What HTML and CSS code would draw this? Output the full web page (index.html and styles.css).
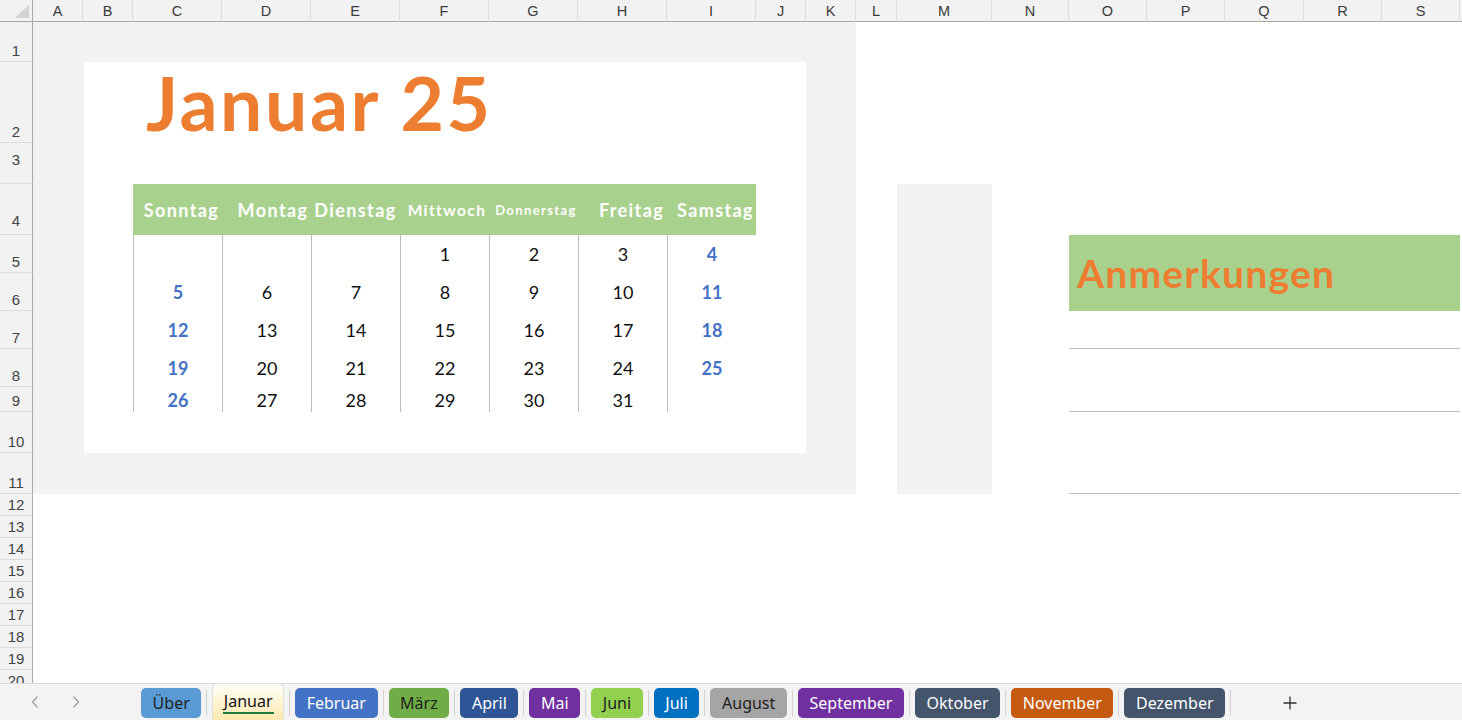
FILE: index.html
```html
<!DOCTYPE html>
<html lang="de">
<head>
<meta charset="utf-8">
<title>Januar 25</title>
<link rel="stylesheet" href="styles.css">
</head>
<body>
<div class="app">
  <div class="sheet">
    <div class="corner"><span class="tri"></span></div>
    <div class="colhead">A</div>
    <div class="colhead">B</div>
    <div class="colhead">C</div>
    <div class="colhead">D</div>
    <div class="colhead">E</div>
    <div class="colhead">F</div>
    <div class="colhead">G</div>
    <div class="colhead">H</div>
    <div class="colhead">I</div>
    <div class="colhead">J</div>
    <div class="colhead">K</div>
    <div class="colhead">L</div>
    <div class="colhead">M</div>
    <div class="colhead">N</div>
    <div class="colhead">O</div>
    <div class="colhead">P</div>
    <div class="colhead">Q</div>
    <div class="colhead">R</div>
    <div class="colhead">S</div>
    <div class="colhead filler"></div>

    <div class="rowhead">1</div>
    <div class="rowhead">2</div>
    <div class="rowhead top">3</div>
    <div class="rowhead low">4</div>
    <div class="rowhead">5</div>
    <div class="rowhead">6</div>
    <div class="rowhead">7</div>
    <div class="rowhead">8</div>
    <div class="rowhead">9</div>
    <div class="rowhead">10</div>
    <div class="rowhead">11</div>
    <div class="rowhead">12</div>
    <div class="rowhead">13</div>
    <div class="rowhead">14</div>
    <div class="rowhead">15</div>
    <div class="rowhead">16</div>
    <div class="rowhead">17</div>
    <div class="rowhead">18</div>
    <div class="rowhead">19</div>
    <div class="rowhead">20</div>

    <div class="panel"></div>
    <div class="card"></div>
    <div class="title">Januar 25</div>

    <div class="calendar">
      <div class="dayname s1">Sonntag</div>
      <div class="dayname s2">Montag</div>
      <div class="dayname">Dienstag</div>
      <div class="dayname md s3">Mittwoch</div>
      <div class="dayname sm s3">Donnerstag</div>
      <div class="dayname s4">Freitag</div>
      <div class="dayname s1">Samstag</div>

      <div class="day"></div>
      <div class="day"></div>
      <div class="day"></div>
      <div class="day">1</div>
      <div class="day">2</div>
      <div class="day">3</div>
      <div class="day we">4</div>

      <div class="day we">5</div>
      <div class="day">6</div>
      <div class="day">7</div>
      <div class="day">8</div>
      <div class="day">9</div>
      <div class="day">10</div>
      <div class="day we">11</div>

      <div class="day we">12</div>
      <div class="day">13</div>
      <div class="day">14</div>
      <div class="day">15</div>
      <div class="day">16</div>
      <div class="day">17</div>
      <div class="day we">18</div>

      <div class="day we">19</div>
      <div class="day">20</div>
      <div class="day">21</div>
      <div class="day">22</div>
      <div class="day">23</div>
      <div class="day">24</div>
      <div class="day we">25</div>

      <div class="day we">26</div>
      <div class="day">27</div>
      <div class="day">28</div>
      <div class="day">29</div>
      <div class="day">30</div>
      <div class="day">31</div>
      <div class="day"></div>
    </div>

    <div class="sidebox"></div>

    <div class="notes">
      <div class="notes-head">Anmerkungen</div>
      <div class="note-line"></div>
      <div class="note-line"></div>
      <div class="note-line"></div>
    </div>
  </div>

  <div class="tabbar">
    <div class="nav">
      <svg class="arrow" width="12" height="14" viewBox="0 0 12 14"><path d="M8.5 1.5 L3.5 7 L8.5 12.5" fill="none" stroke="#a0a0a0" stroke-width="1.3"/></svg>
      <svg class="arrow" width="12" height="14" viewBox="0 0 12 14"><path d="M3.5 1.5 L8.5 7 L3.5 12.5" fill="none" stroke="#a0a0a0" stroke-width="1.3"/></svg>
    </div>
    <div class="tab t-ueber">Über</div>
    <span class="sep"></span>
    <div class="tab active"><span class="ul">Januar</span></div>
    <span class="sep"></span>
    <div class="tab t-feb">Februar</div>
    <span class="sep"></span>
    <div class="tab t-mar">März</div>
    <span class="sep"></span>
    <div class="tab t-apr">April</div>
    <span class="sep"></span>
    <div class="tab t-mai">Mai</div>
    <span class="sep"></span>
    <div class="tab t-jun">Juni</div>
    <span class="sep"></span>
    <div class="tab t-jul">Juli</div>
    <span class="sep"></span>
    <div class="tab t-aug">August</div>
    <span class="sep"></span>
    <div class="tab t-sep">September</div>
    <span class="sep"></span>
    <div class="tab t-okt">Oktober</div>
    <span class="sep"></span>
    <div class="tab t-nov">November</div>
    <span class="sep"></span>
    <div class="tab t-dez">Dezember</div>
    <span class="sep"></span>
    <svg class="plus" width="16" height="16" viewBox="0 0 16 16"><path d="M8 1.5 V14.5 M1.5 8 H14.5" stroke="#333" stroke-width="1.3" fill="none"/></svg>
  </div>
</div>
</body>
</html>
```

FILE: styles.css
```css
* { box-sizing: border-box; }
html, body { margin: 0; padding: 0; }
body {
  width: 1462px;
  height: 720px;
  overflow: hidden;
  background: #ffffff;
  font-family: "Liberation Sans", Arial, sans-serif;
}
.app { display: flex; flex-direction: column; height: 720px; }

.sheet {
  flex: none;
  height: 683px;
  overflow: hidden;
  display: grid;
  grid-template-columns: 33px 50px 50px repeat(7, 89px) 50px 50px 41px 95px 77px 78px 78px 79px 78px 78px 1fr;
  grid-template-rows: 22px 40px 81px 41px 51px repeat(4, 38px) 25px 41px 41px repeat(9, 22px);
}

.corner {
  background: #f2f2f2;
  border-right: 1px solid #a8a8a8;
  border-bottom: 1px solid #a8a8a8;
  display: flex;
  justify-content: flex-end;
  align-items: flex-end;
  padding: 0 3px 3px 0;
}
.tri {
  width: 14px;
  height: 13px;
  background: #d3d3d3;
  clip-path: polygon(100% 0, 100% 100%, 0 100%);
}
.colhead {
  background: #f2f2f2;
  border-bottom: 1px solid #a8a8a8;
  border-right: 1px solid #dcdcdc;
  display: flex;
  align-items: center;
  justify-content: center;
  font-size: 14.5px;
  color: #3b3b3b;
  padding-top: 1px;
}
.colhead.filler { border-right: none; }
.rowhead {
  grid-column: 1;
  background: #f2f2f2;
  border-right: 1px solid #a8a8a8;
  border-bottom: 1px solid #dcdcdc;
  display: flex;
  align-items: flex-end;
  justify-content: center;
  font-size: 15px;
  line-height: 1;
  color: #444;
  padding-bottom: 3px;
}
.rowhead.top { align-items: flex-start; padding-top: 9px; padding-bottom: 0; }
.rowhead.low { padding-bottom: 6px; }

.panel { grid-column: 2 / 13; grid-row: 2 / 13; background: #f2f2f2; }
.card { grid-column: 3 / 12; grid-row: 3 / 12; background: #ffffff; margin-left: 1px; }
.title {
  grid-column: 4 / 12;
  grid-row: 3;
  display: flex;
  align-items: flex-end;
  padding-left: 13px;
  padding-bottom: 3px;
  font-family: Lato, "Open Sans", sans-serif;
  font-weight: 700;
  font-size: 75px;
  letter-spacing: 2.6px;
  line-height: 1;
  color: #ed7d31;
  white-space: nowrap;
}

.calendar {
  grid-column: 4 / 11;
  grid-row: 5 / 11;
  display: grid;
  grid-template-columns: repeat(7, 1fr);
  grid-template-rows: 51px repeat(4, 38px) 25px;
}
.dayname {
  background: #a9d18e;
  color: #ffffff;
  font-family: Lato, "Open Sans", sans-serif;
  font-weight: 700;
  font-size: 18px;
  letter-spacing: 1.4px;
  display: flex;
  align-items: center;
  justify-content: center;
  white-space: nowrap;
}
.dayname.md { font-size: 15.5px; }
.dayname.sm { font-size: 13px; }
.dayname.s1 { padding-left: 8px; }
.dayname.s2 { padding-left: 13px; }
.dayname.s3 { padding-left: 5px; }
.dayname.s4 { padding-left: 18px; }
.day {
  border-left: 1px solid #bcbcbc;
  display: flex;
  align-items: center;
  justify-content: center;
  font-family: Lato, "Open Sans", sans-serif;
  font-size: 18px;
  color: #111;
}
.day.we { color: #4472c4; font-weight: 700; }

.sidebox { grid-column: 14 / 15; grid-row: 5 / 13; background: #f2f2f2; }

.notes {
  grid-column: 16 / 21;
  grid-row: 6 / 13;
  display: grid;
  grid-template-rows: 76px 38px 63px 82px;
}
.notes-head {
  background: #a9d18e;
  display: flex;
  align-items: center;
  padding-left: 8px;
  font-family: Lato, "Open Sans", sans-serif;
  font-weight: 700;
  font-size: 39px;
  letter-spacing: 1.2px;
  color: #ed7d31;
}
.note-line { border-bottom: 1px solid #bdbdbd; }

.tabbar {
  flex: none;
  height: 37px;
  background: #f3f3f3;
  border-top: 1px solid #dadada;
  display: flex;
  align-items: center;
  font-family: "Noto Sans", "Open Sans", sans-serif;
}
.nav {
  flex: none;
  width: 141px;
  display: flex;
  align-items: center;
  padding-left: 29px;
  gap: 29px;
}
.tab {
  flex: none;
  height: 30px;
  margin-top: 1px;
  padding: 0 11.6px;
  border-radius: 5px;
  display: flex;
  align-items: center;
  font-size: 16px;
  line-height: 1;
  color: #ffffff;
}
.sep {
  flex: none;
  width: 1px;
  height: 26px;
  margin: 1px 5px 0;
  background: #d2d2d2;
}
.tab.active {
  align-self: stretch;
  height: auto;
  margin-top: -1px;
  padding: 0 9.5px;
  background: linear-gradient(#fffef9, #fde8ae);
  border: 1px solid #e0e0e0;
  border-bottom: none;
  border-radius: 6px 6px 0 0;
  color: #111;
  justify-content: center;
}
.ul { border-bottom: 2.5px solid #1e7b3e; padding: 2px 1px 3px; }
.t-ueber { background: #5b9bd5; color: #1f1f1f; }
.t-feb { background: #4472c4; }
.t-mar { background: #70ad47; color: #1f1f1f; }
.t-apr { background: #2f5597; }
.t-mai { background: #7030a0; }
.t-jun { background: #92d050; color: #1f1f1f; }
.t-jul { background: #0070c0; }
.t-aug { background: #a5a5a5; color: #1f1f1f; }
.t-sep { background: #7030a0; }
.t-okt { background: #44546a; }
.t-nov { background: #c55a11; }
.t-dez { background: #44546a; }
.plus { flex: none; margin-left: 46px; margin-top: 1px; }
```
